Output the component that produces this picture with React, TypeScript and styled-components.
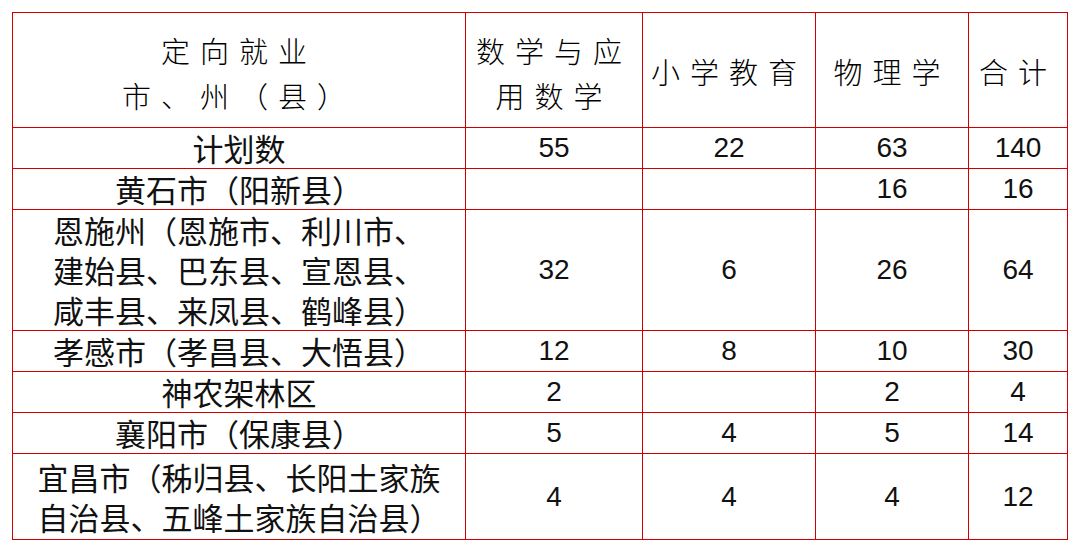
import React from "react";
import styled, { createGlobalStyle } from "styled-components";

const GlobalStyle = createGlobalStyle`
  html, body {
    margin: 0;
    padding: 0;
    background: #ffffff;
  }
`;

const LINE = "1.5px solid #d00000";

const Page = styled.div`
  padding: 12px 0 0 12px;
`;

const Table = styled.table`
  border-collapse: collapse;
  table-layout: fixed;
  width: 1055px;
  border: ${LINE};
  font-family: "Noto Sans CJK SC", "Liberation Sans", sans-serif;
  color: #111;
`;

const Row = styled.tr<{ $h: number }>`
  height: ${({ $h }) => $h}px;
`;

const HeadCell = styled.th<{ $lines?: number }>`
  border: ${LINE};
  padding: ${({ $lines }) => ($lines === 2 ? "6px 0 0" : "2px 0 0")};
  font-weight: 300;
  font-size: 29px;
  line-height: 45px;
  letter-spacing: 10px;
  color: #000;
  text-align: center;
  vertical-align: middle;
`;

const NameCell = styled.td`
  border: ${LINE};
  padding: 0;
  font-size: 31px;
  line-height: 40px;
  text-align: center;
  vertical-align: middle;
`;

const NumCell = styled.td`
  border: ${LINE};
  padding: 0;
  font-family: "Liberation Sans", "Noto Sans CJK SC", sans-serif;
  font-size: 28px;
  line-height: 40px;
  text-align: center;
  vertical-align: middle;
`;

type Entry = {
  name: React.ReactNode;
  h: number;
  vals: (number | null)[];
};

const rows: Entry[] = [
  { name: "计划数", h: 40, vals: [55, 22, 63, 140] },
  { name: "黄石市（阳新县）", h: 40, vals: [null, null, 16, 16] },
  {
    name: (
      <>
        恩施州（恩施市、利川市、
        <br />
        建始县、巴东县、宣恩县、
        <br />
        咸丰县、来凤县、鹤峰县）
      </>
    ),
    h: 121,
    vals: [32, 6, 26, 64],
  },
  { name: "孝感市（孝昌县、大悟县）", h: 40, vals: [12, 8, 10, 30] },
  { name: "神农架林区", h: 41, vals: [2, null, 2, 4] },
  { name: "襄阳市（保康县）", h: 41, vals: [5, 4, 5, 14] },
  {
    name: (
      <>
        宜昌市（秭归县、长阳土家族
        <br />
        自治县、五峰土家族自治县）
      </>
    ),
    h: 86,
    vals: [4, 4, 4, 12],
  },
];

export default function App() {
  return (
    <Page>
      <GlobalStyle />
      <Table>
        <colgroup>
          <col style={{ width: 453 }} />
          <col style={{ width: 177 }} />
          <col style={{ width: 173 }} />
          <col style={{ width: 153 }} />
          <col style={{ width: 99 }} />
        </colgroup>
        <thead>
          <Row $h={115}>
            <HeadCell $lines={2}>
              定向就业
              <br />
              市、州（县）
            </HeadCell>
            <HeadCell $lines={2}>
              数学与应
              <br />
              用数学
            </HeadCell>
            <HeadCell>小学教育</HeadCell>
            <HeadCell>物理学</HeadCell>
            <HeadCell>合计</HeadCell>
          </Row>
        </thead>
        <tbody>
          {rows.map((r, i) => (
            <Row key={i} $h={r.h}>
              <NameCell>{r.name}</NameCell>
              {r.vals.map((v, j) => (
                <NumCell key={j}>{v ?? ""}</NumCell>
              ))}
            </Row>
          ))}
        </tbody>
      </Table>
    </Page>
  );
}
